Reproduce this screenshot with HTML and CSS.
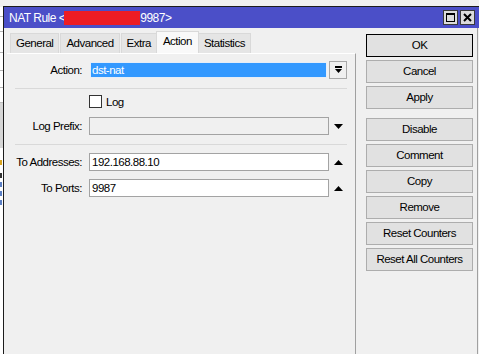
FILE: index.html
```html
<!DOCTYPE html>
<html lang="en">
<head>
  <meta charset="UTF-8" />
  <title>NAT Rule</title>
  <link rel="stylesheet" href="styles.css">
</head>
<body>

<div class="screen">
  <div class="behind">
    <div class="bh-line"></div>
    <div class="bh-line l2"></div>
    <div class="bh-line l3"></div>
    <div class="bh-line l4"></div>
    <div class="bh-line l5"></div>
    <div class="bh-block"></div>
    <div class="bh-dot yellow"></div>
    <div class="bh-dot black"></div>
    <div class="bh-dot blue"></div>
    <div class="bh-dot blue"></div>
    <div class="bh-dot blue"></div>
  </div>

  <div class="window">
    <div class="titlebar">
      <span class="title">NAT Rule &lt;<span class="redact"></span>9987&gt;</span>
      <div class="title-btns">
        <span class="tbtn"><span class="max-icon"></span></span>
        <span class="tbtn">
          <svg width="9" height="9" viewBox="0 0 9 9"><path d="M1 1 L8 8 M8 1 L1 8" stroke="#000" stroke-width="2"/></svg>
        </span>
      </div>
    </div>

    <div class="content">
      <div class="main">
        <div class="tabs">
          <div class="tab">General</div>
          <div class="tab">Advanced</div>
          <div class="tab">Extra</div>
          <div class="tab active">Action</div>
          <div class="tab">Statistics</div>
        </div>

        <div class="panel">
          <div class="row first">
            <span class="lbl">Action:</span>
            <div class="combo">dst-nat</div>
            <div class="drop-btn">
              <svg width="9" height="8" viewBox="0 0 9 8"><rect x="1" y="0" width="7" height="2" fill="#000"/><path d="M1 3 H8 L4.5 7 Z" fill="#000"/></svg>
            </div>
          </div>

          <div class="sep"></div>

          <div class="row check">
            <span class="lbl"></span>
            <label class="check-label"><span class="checkbox"></span>Log</label>
          </div>

          <div class="row">
            <span class="lbl">Log Prefix:</span>
            <div class="field disabled"></div>
            <span class="arrow">
              <svg width="9" height="5" viewBox="0 0 9 5"><path d="M0 0 H9 L4.5 5 Z" fill="#000"/></svg>
            </span>
          </div>

          <div class="sep"></div>

          <div class="row">
            <span class="lbl">To Addresses:</span>
            <div class="field">192.168.88.10</div>
            <span class="arrow">
              <svg width="9" height="5" viewBox="0 0 9 5"><path d="M0 5 H9 L4.5 0 Z" fill="#000"/></svg>
            </span>
          </div>

          <div class="row">
            <span class="lbl">To Ports:</span>
            <div class="field">9987</div>
            <span class="arrow">
              <svg width="9" height="5" viewBox="0 0 9 5"><path d="M0 5 H9 L4.5 0 Z" fill="#000"/></svg>
            </span>
          </div>
        </div>
      </div>

      <div class="side">
        <div class="btn default">OK</div>
        <div class="btn">Cancel</div>
        <div class="btn">Apply</div>
        <div class="btn spaced">Disable</div>
        <div class="btn">Comment</div>
        <div class="btn">Copy</div>
        <div class="btn">Remove</div>
        <div class="btn">Reset Counters</div>
        <div class="btn">Reset All Counters</div>
      </div>
    </div>
  </div>
</div>

</body>
</html>
```

FILE: styles.css
```css
body {
  margin: 0;
  background: #f0f0f0;
  font-family: "Liberation Sans", Arial, sans-serif;
  font-size: 11.5px;
  letter-spacing: -0.5px;
  color: #000;
}
.screen {
  display: flex;
  width: 479px;
  height: 354px;
  overflow: hidden;
}

/* window behind, only a sliver shows */
.behind {
  width: 3px;
  flex: none;
  margin-top: 7px;
  background: #fff;
}
.bh-line {
  height: 1px;
  background: #b5b5b5;
  margin-top: 9px;
}
.bh-line.l2 { margin-top: 14px; }
.bh-line.l3 { margin-top: 20px; }
.bh-line.l4 { margin-top: 17px; }
.bh-line.l5 { margin-top: 16px; }
.bh-block {
  height: 45px;
  margin-top: 14px;
  background: #d6d6d6;
  border-top: 1px solid #bdbdbd;
}
.bh-dot {
  height: 5px;
  width: 2px;
  margin-top: 8px;
}
.bh-dot.yellow { background: #d9a520; margin-top: 12px; }
.bh-dot.black { background: #333; }
.bh-dot.blue { background: #5b7fc4; margin-top: 4px; }

.window {
  flex: 1;
  min-width: 0;
  margin-top: 6px;
  border-top: 1px solid #1c1c1c;
  border-left: 1px solid #1c1c1c;
  display: flex;
  flex-direction: column;
}
.titlebar {
  height: 21px;
  flex: none;
  background: #4b4fc8;
  color: #fff;
  display: flex;
  align-items: center;
  justify-content: space-between;
  padding: 0 4px 0 5px;
}
.title {
  display: flex;
  align-items: center;
  font-size: 12px;
}
.redact {
  display: inline-block;
  width: 76px;
  height: 14px;
  background: #ed1c24;
  margin-left: -1px;
}
.title-btns {
  display: flex;
  gap: 2px;
}
.tbtn {
  width: 15px;
  height: 15px;
  box-sizing: border-box;
  border: 1px solid #3a3a3a;
  background: #dcdcdc;
  display: flex;
  align-items: center;
  justify-content: center;
}
.max-icon {
  width: 9px;
  height: 9px;
  box-sizing: border-box;
  border: 1px solid #000;
  border-top-width: 2px;
}

.content {
  flex: 1;
  display: flex;
  border-right: 1px solid #a0a0a0;
  margin-right: 1px;
}
.main {
  width: 352px;
  flex: none;
  padding-top: 3px;
  display: flex;
  flex-direction: column;
}
.tabs {
  display: flex;
  align-items: flex-end;
  height: 22px;
  padding-left: 6px;
}
.tab {
  height: 20px;
  box-sizing: border-box;
  padding: 0 5px;
  border: 1px solid #d9d9d9;
  border-bottom: none;
  background: #e5e5e5;
  line-height: 19px;
  margin-right: 1px;
}
.tab.active {
  height: 22px;
  background: #f9f9f9;
  padding: 0 6px;
  margin: 0 -1px 0 -2px;
  line-height: 19px;
  position: relative;
}
.panel {
  flex: 1;
  margin-left: 3px;
  border-top: 1px solid #fff;
  border-right: 1px solid #a0a0a0;
  padding: 7px 0 0 8px;
}
.row {
  display: grid;
  grid-template-columns: 74px 240px 18px;
  align-items: center;
  height: 18px;
  margin-top: 8px;
}
.row.first { margin-top: 0; }
.row.check {
  height: 13px;
  margin-top: 6px;
}
.lbl {
  text-align: right;
  padding-right: 7px;
  white-space: nowrap;
}
.sep {
  width: 332px;
  height: 1px;
  background: #d9d9d9;
  margin-top: 9px;
}
.row + .sep { margin-top: 9px; }
.sep + .row { margin-top: 8px; }
.sep + .row.check { margin-top: 6px; }
.row.check + .row { margin-top: 9px; }

.combo {
  height: 16px;
  margin: 0 2px 0 1px;
  box-sizing: border-box;
  border: 1px solid #e6eef8;
  background: #3399ff;
  color: #fff;
  padding-left: 1px;
  line-height: 14px;
}
.drop-btn {
  width: 18px;
  height: 18px;
  box-sizing: border-box;
  border: 1px solid #a8a8a8;
  background: #f0f0f0;
  display: flex;
  align-items: center;
  justify-content: center;
}
.field {
  height: 18px;
  box-sizing: border-box;
  border: 1px solid #a3a3a3;
  background: #fff;
  padding-left: 2px;
  line-height: 16px;
}
.field.disabled { background: #f0f0f0; }
.arrow {
  display: flex;
  justify-content: center;
}
.check-label {
  display: flex;
  align-items: center;
}
.checkbox {
  width: 13px;
  height: 13px;
  box-sizing: border-box;
  border: 1px solid #333;
  background: #fff;
  margin-right: 4px;
}

.side {
  flex: 1;
  padding: 6px 0 0 10px;
  display: flex;
  flex-direction: column;
  gap: 3px;
}
.btn {
  width: 107px;
  height: 23px;
  box-sizing: border-box;
  border: 1px solid #adadad;
  background: #e1e1e1;
  text-align: center;
  line-height: 21px;
}
.btn.default { border-color: #000; }
.btn.spaced { margin-top: 6px; }
```
